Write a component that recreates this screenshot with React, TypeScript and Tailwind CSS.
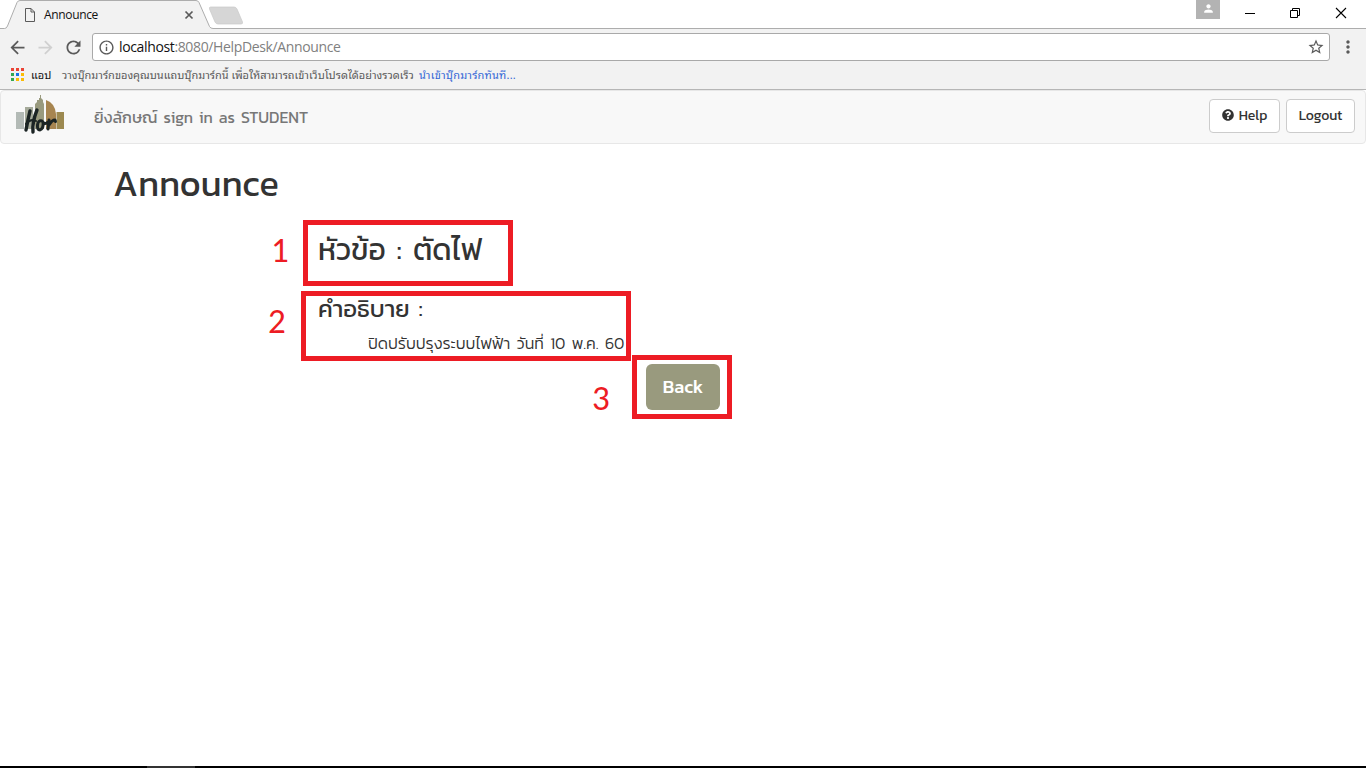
import React from "react";
import { MdArrowBack, MdArrowForward, MdRefresh, MdInfoOutline, MdStarBorder, MdMoreVert, MdPerson } from "react-icons/md";
import { FaQuestionCircle } from "react-icons/fa";

const APP_COLORS = ["#ea4335", "#ea4335", "#ea4335", "#34a853", "#1a73e8", "#fbbc05", "#34a853", "#fbbc05", "#fbbc05"];

function TabStrip() {
  return (
    <div className="relative flex h-[29px] w-full bg-white">
      <svg className="absolute left-0 top-0" width="1366" height="29" viewBox="0 0 1366 29">
        <path d="M0 28.5H4.5Q6.5 28.5 7.5 26L17 2.5Q18 .5 20 .5H196Q198 .5 199 2.5L209.500 26.500Q210.500 28.500 213 28.500H1366V30H0Z" fill="#f2f2f2" stroke="#adadad" />
        <path d="M210.500 7H234Q236 7 237 9L242.500 22Q243 24 241 24H218Q216 24 215 22L209.500 9Q209 7 210.500 7Z" fill="#d6d6d6" stroke="#c8c8c8" strokeWidth=".7" />
        <path d="M25.500 8.500H31L34.500 12V21.500H25.500ZM31 8.500V12H34.500" fill="none" stroke="#5a5a5a" />
        <path d="M185.500 11.500L192.500 18.500M192.500 11.500L185.500 18.500" stroke="#5a5a5a" strokeWidth="1.700" />
      </svg>
      <span className="relative ml-[44px] mt-[7px] h-4 text-[12px] leading-4 tracking-[-0.35px] text-[#111] font-['Open_Sans',sans-serif]">Announce</span>
      <div className="relative ml-auto flex">
        <div className="flex h-[19px] w-6 items-start justify-center bg-[#b3b3b3] pt-[2px] text-white">
          <MdPerson size={13} />
        </div>
        <svg className="ml-[24px]" width="122" height="28" viewBox="0 0 122 28" fill="none" stroke="#000">
          <path d="M1 13.500H11M46.500 10.500H53.500V17.500H46.500ZM48.500 10.500V8.500H55.500V15.500H53.500" />
          <path d="M92 8L102 18M102 8L92 18" strokeWidth="1.100" />
        </svg>
      </div>
    </div>
  );
}

function Toolbar() {
  return (
    <div className="h-[61px] border-b border-[#b6b6b6] bg-[#f2f2f2] pt-1">
      <div className="flex h-7 items-center text-[#5a5a5a]">
        <MdArrowBack size={21} className="ml-[7px]" />
        <MdArrowForward size={21} className="ml-[7px] text-[#d0d0d0]" />
        <MdRefresh size={21} className="ml-[7px]" />
        <div className="ml-2 flex h-7 w-[1238px] items-center rounded-[3px] border border-[#a9a9a9] bg-white">
          <MdInfoOutline size={17} className="ml-[5px]" />
          <span className="ml-[4px] whitespace-pre text-[14px] leading-5 tracking-[-0.36px] text-[#808080] font-['Open_Sans',sans-serif]"><span className="text-[#111]">localhost</span>:8080/HelpDesk/Announce</span>
          <MdStarBorder size={18} className="ml-auto mr-[4px]" />
        </div>
        <MdMoreVert size={20} className="ml-[8px]" />
      </div>
      <div className="flex h-[26px] items-center pl-[11px] text-[11px] text-[#5a5a5a] font-['Noto_Sans_Thai_Looped','Loma','Garuda','Waree','Norasi',sans-serif]">
        <div className="grid grid-cols-3 gap-[2px]">
          {APP_COLORS.map((c, i) => <span key={i} className="size-[3px]" style={{ backgroundColor: c }} />)}
        </div>
        <span className="ml-[7px] w-[31px] whitespace-nowrap text-[#111]">แอป</span>
        <span className="w-[357px] whitespace-nowrap tracking-[-0.01px]">วางบุ๊กมาร์กของคุณบนแถบบุ๊กมาร์กนี้ เพื่อให้สามารถเข้าเว็บโปรดได้อย่างรวดเร็ว</span>
        <span className="whitespace-nowrap tracking-[0.22px] text-[#3367d6]">นำเข้าบุ๊กมาร์กทันที...</span>
      </div>
    </div>
  );
}

function Logo() {
  return (
    <svg width="50" height="42" viewBox="0 0 50 42">
      <path d="M0 18H8V35H0Z" fill="#b3bab6" />
      <path d="M9 13H17V35H9Z" fill="#a5aa9a" />
      <path d="M19 10L21 8V6H23V4H24V1H25V4L27 6V8L28 10V35H19Z" fill="#999a7e" />
      <path d="M30 6Q39 9 40 20V35H30Z" fill="#a78550" />
      <path d="M40.500 18H48V35H40.500Z" fill="#9c8950" />
      <g fill="none" stroke="#1b2424" strokeWidth="3" strokeLinecap="round" strokeLinejoin="round">
        <path d="M14 17Q12 25 10 36M21 16Q16 28 17 38" strokeWidth="3.400" />
        <path d="M10 30Q15 24 20 27" strokeWidth="2" />
        <path d="M26 27Q22 26 21.500 31Q21 36 24 36Q28 34 27 28Q29 31 32 28M33 26L32 35M33 31Q36 26 39 26L39.500 27.500" />
      </g>
    </svg>
  );
}

function NavButton({ className, children }: { className: string; children: React.ReactNode }) {
  return <button className={`flex h-[34px] items-center justify-center rounded border border-[#ccc] bg-white pb-[2px] text-[14px] text-[#333] ${className}`}>{children}</button>;
}

function Mark({ className, label }: { className: string; label: string }) {
  return <span className={`absolute text-[35px] leading-8 text-[#ed1c24] font-['Carlito','Lato',sans-serif] ${className}`}>{label}</span>;
}

export default function App() {
  return (
    <div className="relative flex h-[768px] w-[1366px] flex-col overflow-hidden bg-white text-[#333] font-['Kanit','Noto_Sans','Noto_Sans_Thai',sans-serif]">
      <TabStrip />
      <Toolbar />
      <nav className="flex h-[54px] shrink-0 items-start rounded border border-[#e7e7e7] bg-[#f8f8f8] pl-[15px] pr-[10px]">
        <div className="mt-[3px]"><Logo /></div>
        <span className="ml-[28px] mt-[14px] whitespace-nowrap text-[16px] leading-6 [word-spacing:2.3px] text-[#777]">ยิ่งลักษณ์ sign in as STUDENT</span>
        <div className="ml-auto mt-2 flex gap-[6px]">
          <NavButton className="w-[71px]"><FaQuestionCircle size={12} className="mr-[5px]" />Help</NavButton>
          <NavButton className="w-[69px] tracking-[-0.1px]">Logout</NavButton>
        </div>
      </nav>
      <main className="flex flex-1 flex-col items-start">
        <h1 className="ml-[113px] mt-[19px] h-10 whitespace-nowrap text-[36px] leading-10 tracking-[0.1px]">Announce</h1>
        <h2 className="ml-[318px] mt-[29px] h-9 whitespace-nowrap text-[30px] leading-9 [word-spacing:4px]">หัวข้อ : ตัดไฟ</h2>
        <h3 className="ml-[318px] mt-[27px] h-7 whitespace-nowrap text-[24px] leading-7 [word-spacing:3.5px]">คำอธิบาย :</h3>
        <p className="ml-[368px] mt-[8px] h-6 whitespace-nowrap text-[16px] font-light leading-6 [word-spacing:2.7px]">ปิดปรับปรุงระบบไฟฟ้า วันที่ 10 พ.ค. 60</p>
        <button className="ml-[646px] mt-[9px] h-[46px] w-[74px] rounded-md bg-[#999a7e] pb-[2px] text-[18px] font-medium text-white">Back</button>
      </main>
      <div className="flex h-[2px] bg-black"><span className="ml-[147px] w-12 bg-[#333]" /></div>
      <div className="absolute left-[303px] top-[220px] h-[66px] w-[210px] border-5 border-[#ed1c24]" />
      <div className="absolute left-[301px] top-[291px] h-[70px] w-[330px] border-5 border-[#ed1c24]" />
      <div className="absolute left-[632px] top-[355px] h-[64px] w-[100px] border-5 border-[#ed1c24]" />
      <Mark label="1" className="left-[271px] top-[234px]" />
      <Mark label="2" className="left-[268px] top-[305px]" />
      <Mark label="3" className="left-[592px] top-[382px]" />
    </div>
  );
}
